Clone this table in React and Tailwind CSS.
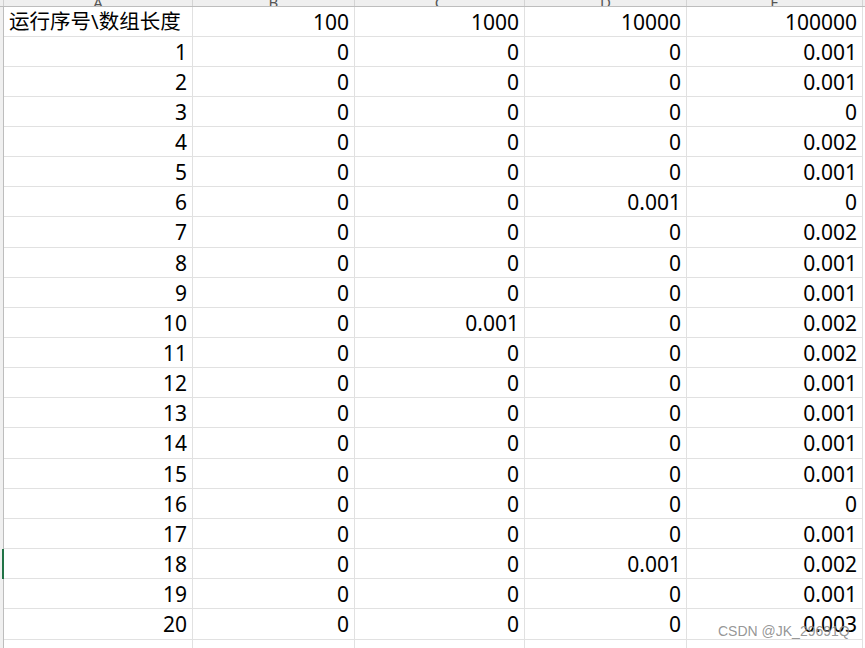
import React from "react";

const rows = [
  [1, "0", "0", "0", "0.001"],
  [2, "0", "0", "0", "0.001"],
  [3, "0", "0", "0", "0"],
  [4, "0", "0", "0", "0.002"],
  [5, "0", "0", "0", "0.001"],
  [6, "0", "0", "0.001", "0"],
  [7, "0", "0", "0", "0.002"],
  [8, "0", "0", "0", "0.001"],
  [9, "0", "0", "0", "0.001"],
  [10, "0", "0.001", "0", "0.002"],
  [11, "0", "0", "0", "0.002"],
  [12, "0", "0", "0", "0.001"],
  [13, "0", "0", "0", "0.001"],
  [14, "0", "0", "0", "0.001"],
  [15, "0", "0", "0", "0.001"],
  [16, "0", "0", "0", "0"],
  [17, "0", "0", "0", "0.001"],
  [18, "0", "0", "0.001", "0.002"],
  [19, "0", "0", "0", "0.001"],
  [20, "0", "0", "0", "0.003"],
];

const widths = ["w-[189px]", "w-[162px]", "w-[170px]", "w-[162px]", "w-[176px]"];
const letters = ["A", "B", "C", "D", "E"];

const Row = ({ cells, tall, selected, first }) => (
  <div className={`flex ${tall ? "h-[31px]" : "h-[30px]"}`}>
    <div
      className={`w-[4px] shrink-0 bg-[#f0f0f0] border-r ${
        selected ? "border-r-2 border-[#217346]" : "border-[#bdbdbd]"
      }`}
    />
    {cells.map((c, i) => (
      <div
        key={i}
        className={`${widths[i]} shrink-0 border-r border-b border-[#e1e1e1] flex items-center ${
          first && i === 0
            ? "justify-start pl-[5px] text-[20.5px]"
            : "justify-end pr-[5px] pt-[1px]"
        }`}
      >
        {c}
      </div>
    ))}
  </div>
);

export default function App() {
  return (
    <div
      className="relative w-[865px] h-[648px] overflow-hidden bg-white text-black text-[21px] leading-none"
      style={{ fontFamily: '"Noto Sans", "Noto Sans CJK SC", sans-serif' }}
    >
      {/* column header strip, cut off */}
      <div className="flex h-[7px] bg-[#efefef] border-b border-[#bdbdbd] overflow-hidden">
        <div className="w-[4px] shrink-0 border-r border-[#d0d0d0]" />
        {letters.map((l, i) => (
          <div
            key={l}
            className={`${widths[i]} shrink-0 border-r border-[#d4d4d4] flex justify-center items-end text-[15px] text-[#555]`}
          >
            <span className="-mb-[4px]">{l}</span>
          </div>
        ))}
      </div>

      <Row cells={["运行序号\\数组长度", "100", "1000", "10000", "100000"]} first />
      {rows.map((r, idx) => (
        <Row
          key={r[0]}
          cells={r}
          selected={r[0] === 18}
          tall={idx === 6 || idx === 13 || idx === 19}
        />
      ))}
      <Row cells={["", "", "", "", ""]} />

      <div
        className="absolute left-[718px] top-[624px] text-[14px] text-[#8a8a8a]/90"
        style={{ fontFamily: '"Liberation Sans", Arial, sans-serif' }}
      >
        CSDN @JK_29691Q
      </div>
    </div>
  );
}
